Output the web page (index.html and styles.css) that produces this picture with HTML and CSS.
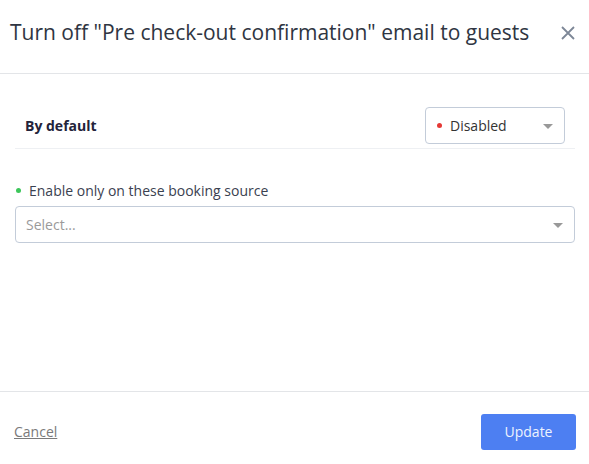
FILE: index.html
```html
<!DOCTYPE html>
<html>
<head>
<meta charset="utf-8">
<link rel="stylesheet" href="styles.css">
</head>
<body>
<div class="modal">
  <header class="modal-header">
    <h1 class="modal-title">Turn off "Pre check-out confirmation" email to guests</h1>
    <button class="close-btn" aria-label="Close">
      <svg width="14" height="14" viewBox="0 0 14 14"><path d="M1 1L13 13M13 1L1 13" stroke="#7d8797" stroke-width="1.8" fill="none"/></svg>
    </button>
  </header>
  <main class="modal-body">
    <div class="default-row">
      <span class="default-label">By default</span>
      <div class="select select-small">
        <span class="dot dot-red"></span>
        <span class="select-value">Disabled</span>
        <span class="caret"></span>
      </div>
    </div>
    <div class="field">
      <label class="field-label"><span class="dot dot-green"></span>Enable only on these booking source</label>
      <div class="select select-wide">
        <span class="select-placeholder">Select...</span>
        <span class="caret"></span>
      </div>
    </div>
  </main>
  <footer class="modal-footer">
    <a class="cancel" href="#">Cancel</a>
    <button class="update-btn">Update</button>
  </footer>
</div>
</body>
</html>
```
FILE: styles.css
```css
* { box-sizing: border-box; }
html, body { margin: 0; padding: 0; background: #fff; }
body { font-family: "Open Sans", "Noto Sans", sans-serif; }
.modal { display: flex; flex-direction: column; height: 100vh; }
.modal-header {
  height: 74px;
  border-bottom: 1px solid #e3e5e8;
  display: flex;
  align-items: flex-start;
  justify-content: space-between;
  padding: 18px 14px 0 10px;
}
.modal-title {
  margin: 0;
  font-size: 21px;
  line-height: 29px;
  font-weight: 400;
  color: #2f3542;
}
.close-btn {
  border: 0; background: none; padding: 0; margin-top: 8px;
  width: 14px; height: 14px; display: block;
}
.close-btn svg { display: block; }
.modal-body { flex: 1; padding: 33px 14px 0 15px; }
.default-row {
  display: flex; align-items: center; justify-content: space-between;
  padding: 0 10px 4px 10px;
  border-bottom: 1px solid #eef0f3;
}
.default-label { font-size: 14px; font-weight: 700; color: #23233a; }
.select {
  position: relative;
  display: flex; align-items: center;
  height: 37px;
  border: 1px solid #c3ccd9;
  border-radius: 4px;
  font-size: 14px;
}
.select-small { width: 140px; padding-left: 11px; }
.select-wide { width: 560px; padding-left: 10px; }
.select-value { color: #333; }
.select-placeholder { color: #9a9a9a; }
.dot { display: inline-block; width: 5px; height: 5px; border-radius: 50%; }
.dot-red { background: #e53935; margin-right: 8px; }
.dot-green { background: #3cc65a; margin-right: 8px; vertical-align: middle; position: relative; top: -2px; margin-left: 1px; }
.caret {
  position: absolute; right: 11px; top: 50%; margin-top: -2px;
  width: 0; height: 0;
  border-left: 5px solid transparent; border-right: 5px solid transparent;
  border-top: 5px solid #999;
}
.field { margin-top: 32px; }
.field-label { display: block; font-size: 14px; line-height: 19px; color: #3a4150; margin-bottom: 6px; }
.modal-footer {
  height: 73px;
  border-top: 1px solid #e3e5e8;
  display: flex; align-items: flex-start; justify-content: space-between;
  padding: 22px 13px 0 14px;
}
.cancel { font-size: 14px; color: #7a7a7a; text-decoration: underline; line-height: 36px; }
.update-btn {
  width: 95px; height: 36px; padding: 0 0 1px;
  background: #4d7ff2; color: #eef3fe;
  border: 0; border-radius: 3px;
  font-family: inherit; font-size: 14px;
}
```
